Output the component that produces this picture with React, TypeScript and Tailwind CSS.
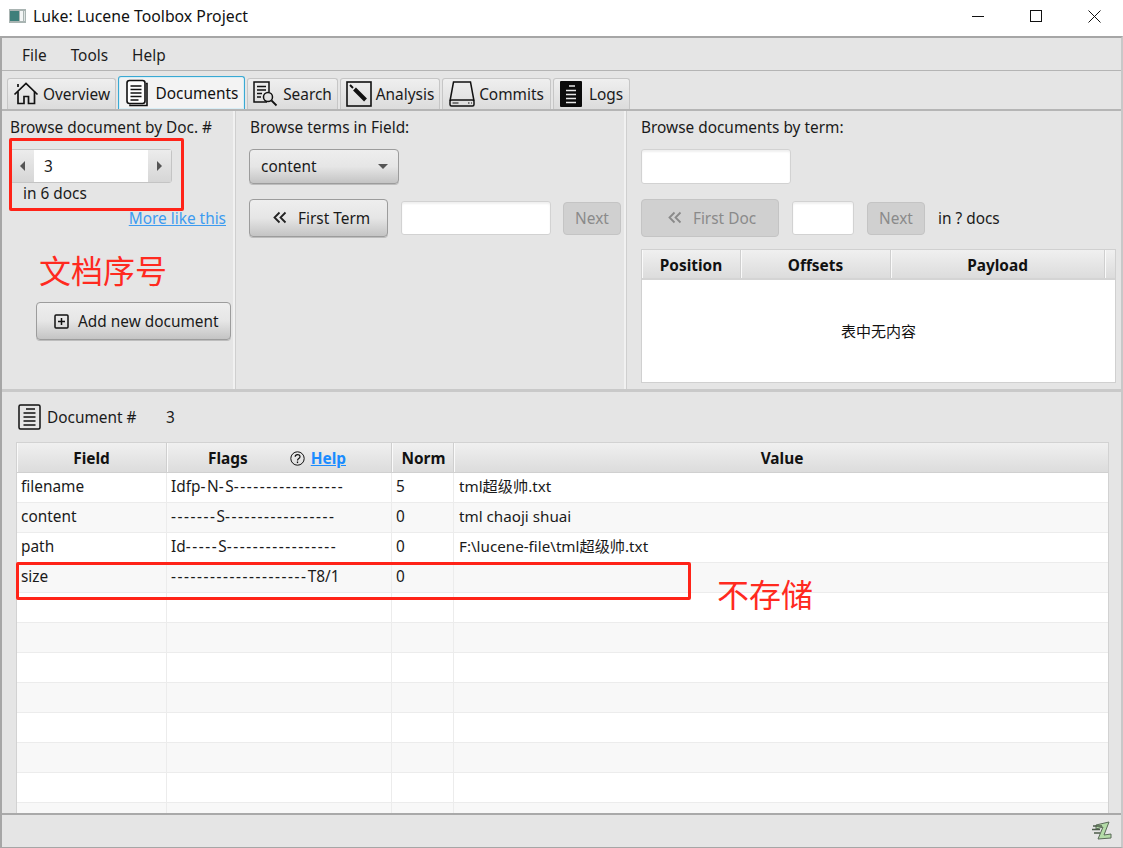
import React from 'react';

const UI_FONT = "font-['Noto_Sans','Noto_Sans_CJK_SC',sans-serif]";

const HomeIcon = () => (
  <svg width="26" height="26" viewBox="0 0 26 26" fill="none" stroke="#111" strokeWidth="1.7">
    <path d="M1.5 13.5 13 2.5l11.5 11" />
    <path d="M5 6V3M5 10.5V22.5h6v-7h4.5v7h6V10.5" />
  </svg>
);

const DocumentsIcon = () => (
  <svg width="24" height="28" viewBox="0 0 24 28" fill="none" stroke="#111" strokeWidth="1.6">
    <path d="M5 25.5v1h17V4.5h-1" />
    <rect x="2" y="1.5" width="18" height="23" rx="2.5" fill="#fff" />
    <path d="M5.5 7h11M5.5 10.5h11M5.5 14h11M5.5 17.5h11M5.5 21h8" strokeWidth="1.5" />
  </svg>
);

const SearchDocIcon = () => (
  <svg width="25" height="26" viewBox="0 0 25 26" fill="none" stroke="#111" strokeWidth="1.5">
    <path d="M14 21H1V1h15v10" />
    <path d="M4 5.5h9M4 9h9M4 12.5h5M4 16h4" />
    <circle cx="15" cy="16" r="4.5" />
    <path d="m18.5 19.5 5 5" strokeWidth="1.8" />
  </svg>
);

const AnalysisIcon = () => (
  <svg width="26" height="26" viewBox="0 0 26 26" fill="none">
    <rect x="1" y="1" width="24" height="24" stroke="#111" strokeWidth="1.6" />
    <path d="m8.5 8 11 11" stroke="#111" strokeWidth="4" />
    <path d="m4 4 3 3" stroke="#111" strokeWidth="2" />
  </svg>
);

const CommitsIcon = () => (
  <svg width="26" height="26" viewBox="0 0 26 26" fill="none" stroke="#111" strokeWidth="1.5">
    <path d="M1 20 4.5 1h17L25 20" />
    <rect x="1" y="19" width="24" height="6" rx="1.5" />
    <path d="M3.500 22h6M19 22h1.500M22 22h1" strokeWidth="1.2" />
  </svg>
);

const LogsIcon = () => (
  <svg width="22" height="26" viewBox="0 0 22 26">
    <rect width="22" height="26" rx="1" fill="#0b0b0b" />
    <path d="M9 5h6M6 9.500h10M6 13.500h10M6 17.500h10M6 21.500h10" stroke="#e8e8e8" strokeWidth="1.5" />
  </svg>
);

const PlusBoxIcon = () => (
  <svg width="15" height="15" viewBox="0 0 15 15" fill="none" stroke="#111">
    <rect x="1" y="1" width="13" height="13" rx="1" strokeWidth="1.5" />
    <path d="M7.500 4v7M4 7.500h7" strokeWidth="1.5" />
  </svg>
);

const ChevronsIcon = ({ color = '#222' }: { color?: string }) => (
  <svg width="14" height="14" viewBox="0 0 14 14" fill="none" stroke={color} strokeWidth="1.8">
    <path d="M6.500 1.500 1.500 6.500l5 5M12.500 1.500l-5 5 5 5" />
  </svg>
);

const DocIcon = () => (
  <svg width="23" height="26" viewBox="0 0 23 26" fill="none" stroke="#111">
    <rect x="1" y="1" width="21" height="24" rx="1.5" strokeWidth="1.5" />
    <path d="M8 5h9M5.500 9h12M5.500 13h12M5.500 17h12M5.500 21h12" strokeWidth="1.4" />
  </svg>
);

const HelpIcon = () => (
  <svg width="15" height="15" viewBox="0 0 15 15" fill="none" stroke="#111">
    <circle cx="7.500" cy="7.500" r="6.700" />
    <path d="M5.200 5.800c0-3 4.800-3 4.800-.1 0 1.800-2.500 1.900-2.500 3.700" strokeWidth="1.2" />
    <path d="M7.500 10.500v1.600" strokeWidth="1.3" />
  </svg>
);

const LukeLogo = () => (
  <svg width="20" height="20" viewBox="0 0 20 20">
    <path d="M4 4 17 1l-5 13 7-1 0 4-13 1 5-12-7 2z" fill="#b4dca8" stroke="#5a6b58" strokeWidth="1" />
    <path d="M1 5h9M0 8.500h8M2 12h6" stroke="#4d5c4b" strokeWidth="1.3" />
  </svg>
);

const tabs = [
  { label: 'Overview', icon: <HomeIcon />, width: 'w-[109px]', gap: 'gap-[4px]' },
  { label: 'Documents', icon: <DocumentsIcon />, width: 'w-[127px]', gap: 'gap-[7px]', active: true },
  { label: 'Search', icon: <SearchDocIcon />, width: 'w-[91px]', gap: 'gap-[5px]' },
  { label: 'Analysis', icon: <AnalysisIcon />, width: 'w-[100px]', gap: 'gap-[4px]' },
  { label: 'Commits', icon: <CommitsIcon />, width: 'w-[109px]', gap: 'gap-[4px]' },
  { label: 'Logs', icon: <LogsIcon />, width: 'w-[77px]', gap: 'gap-[7px]' },
];

const Tab = ({ label, icon, width, gap, active }: { label: string; icon: React.ReactNode; width: string; gap: string; active?: boolean }) => (
  <div
    className={
      active
        ? `${width} ${gap} flex h-[33px] items-center justify-center rounded-t-[3px] border border-b-0 border-[#39a9d3] bg-[#f3f3f3] text-[#111] shadow-[inset_0_0_0_1px_#d8eef6]`
        : `${width} ${gap} flex h-[31px] items-center justify-center rounded-t-[3px] border border-b-0 border-[#c6c6c6] bg-gradient-to-b from-[#efefef] to-[#dcdcdc] text-[#1a1a1a]`
    }
  >
    {icon}
    <span>{label}</span>
  </div>
);

const Button = ({ children, className }: { children: React.ReactNode; className: string }) => (
  <div className={`flex items-center rounded-[4px] border border-[#9c9c9c] bg-gradient-to-b from-[#eeeeee] via-[#e6e6e6] to-[#c4c4c4] text-[#1a1a1a] shadow-[0_1px_0_#bdbdbd] ${className}`}>
    {children}
  </div>
);

const DisabledButton = ({ children, className }: { children: React.ReactNode; className: string }) => (
  <div className={`flex items-center justify-center rounded-[4px] border border-[#c4c4c4] bg-[#d0d0d0] text-[#8a8a8a] ${className}`}>
    {children}
  </div>
);

const Input = ({ className }: { className: string }) => (
  <div className={`rounded-[3px] border border-[#d2d2d2] bg-white shadow-[inset_0_2px_2px_#f0f0f0] ${className}`} />
);

const HeaderCell = ({ children, className }: { children?: React.ReactNode; className: string }) => (
  <div className={`flex h-full shrink-0 items-center justify-center border-r border-[#cfcfcf] bg-gradient-to-b from-[#f0f0f0] to-[#dcdcdc] font-bold text-[#111] shadow-[inset_1px_0_0_#fafafa] ${className}`}>
    {children}
  </div>
);

// the dashes in the flags column are wider than this font's hyphen
const Flags = ({ value }: { value: string }) => (
  <>
    {value.split(/(-+)/).map((part, i) =>
      part.startsWith('-') ? (
        <span key={i} className="tracking-[1.55px]">{part}</span>
      ) : (
        <span key={i}>{part}</span>
      )
    )}
  </>
);

const rows = [
  ['filename', 'Idfp-N-S-----------------', '5', 'tml超级帅.txt'],
  ['content', '-------S-----------------', '0', 'tml chaoji shuai'],
  ['path', 'Id-----S-----------------', '0', 'F:\\lucene-file\\tml超级帅.txt'],
  ['size', '---------------------T8/1', '0', ''],
  ['', '', '', ''],
  ['', '', '', ''],
  ['', '', '', ''],
  ['', '', '', ''],
  ['', '', '', ''],
  ['', '', '', ''],
  ['', '', '', ''],
  ['', '', '', ''],
];

export default function App() {
  return (
    <div className={`relative flex h-[848px] w-[1123px] flex-col overflow-hidden bg-white text-[15.4px] leading-[17px] text-[#1a1a1a] ${UI_FONT}`}>
      {/* Title bar */}
      <div className="flex h-[36px] shrink-0 items-center bg-white pb-[4px] pl-[9px]">
        <svg width="17" height="14" viewBox="0 0 17 14" className="mr-[7px]">
          <rect width="17" height="14" fill="#a9b4b2" />
          <rect x="1" y="2" width="9" height="10" fill="#3e7f7a" />
          <rect x="11" y="2" width="3" height="10" fill="#f4f6f6" />
          <rect x="15" y="2" width="1" height="10" fill="#dfe5e4" />
        </svg>
        <span className="text-[15.8px] text-[#111]">Luke: Lucene Toolbox Project</span>
        <div className="ml-auto flex items-center">
          <div className="flex w-[58px] justify-center"><div className="h-px w-[12px] bg-[#111]" /></div>
          <div className="flex w-[58px] justify-center"><div className="h-[12px] w-[12px] border border-[#111]" /></div>
          <div className="flex w-[58px] justify-center">
            <svg width="13" height="13" viewBox="0 0 13 13" stroke="#111"><path d="m.5.5 12 12M12.500.5l-12 12" /></svg>
          </div>
        </div>
      </div>

      {/* Window body */}
      <div className="flex min-h-0 flex-1 flex-col border-x-2 border-t-2 border-b border-[#a6a6a6] border-r-[#c8c8c8] bg-[#e5e5e5]">
        {/* Menu */}
        <div className="flex h-[33px] shrink-0 items-center gap-[24px] border-b border-[#b4b4b4] pl-[20px] pt-[2px] text-[#1c1c1c]">
          <span>File</span>
          <span>Tools</span>
          <span>Help</span>
        </div>

        {/* Tabs */}
        <div className="flex h-[40px] shrink-0 items-end gap-[2px] border-b-2 border-[#b5b5b5] pl-[5px]">
          {tabs.map((tab) => (
            <Tab key={tab.label} {...tab} />
          ))}
        </div>

        {/* Browse panes */}
        <div className="flex h-[281px] shrink-0 border-b-[3px] border-[#c9c9c9]">
          <div className="flex w-[233px] shrink-0 flex-col border-r-2 border-[#f1f1f1] pl-[8px] pt-[8px] shadow-[1px_0_0_#cfcfcf]">
            <span className="h-[16px] leading-[18px]">Browse document by Doc. #</span>
            <div className="mt-[14px] flex h-[34px] w-[162px] items-stretch rounded-[3px] border border-[#c4c4c4] bg-[#dedede]">
              <div className="flex w-[23px] items-center justify-center bg-gradient-to-b from-[#ececec] to-[#d6d6d6]">
                <div className="h-0 w-0 border-y-[5px] border-r-[5px] border-y-transparent border-r-[#555]" />
              </div>
              <div className="flex w-[114px] items-center bg-white pl-[10px]">3</div>
              <div className="flex flex-1 items-center justify-center bg-gradient-to-b from-[#ececec] to-[#d6d6d6]">
                <div className="h-0 w-0 border-y-[5px] border-l-[5px] border-y-transparent border-l-[#555]" />
              </div>
            </div>
            <span className="mt-[2px] h-[16px] pl-[13px] leading-[18px]">in 6 docs</span>
            <a className="mt-[9px] mr-[7px] h-[17px] self-end leading-[18px] text-[#3d9bf0] underline">More like this</a>
            <span className="mt-[26px] ml-[29px] h-[36px] text-[32px] leading-[36px] text-[#ff2a1f]">文档序号</span>
            <Button className="mt-[13px] ml-[26px] h-[38px] w-[195px] pl-[17px]">
              <PlusBoxIcon />
              <span className="ml-[9px]">Add new document</span>
            </Button>
          </div>

          <div className="flex w-[391px] shrink-0 flex-col border-r-2 border-[#f1f1f1] pl-[14px] pt-[8px] shadow-[1px_0_0_#cfcfcf]">
            <span className="ml-px h-[16px] leading-[18px]">Browse terms in Field:</span>
            <Button className="mt-[14px] h-[35px] w-[150px] justify-between pl-[11px] pr-[10px]">
              <span>content</span>
              <div className="h-0 w-0 border-x-[5px] border-t-[5px] border-x-transparent border-t-[#555]" />
            </Button>
            <div className="mt-[15px] flex items-center">
              <Button className="h-[38px] w-[139px] pl-[23px]">
                <ChevronsIcon />
                <span className="ml-[11px]">First Term</span>
              </Button>
              <Input className="ml-[13px] h-[34px] w-[150px]" />
              <DisabledButton className="ml-[12px] h-[33px] w-[58px]">Next</DisabledButton>
            </div>
          </div>

          <div className="flex min-w-0 flex-1 flex-col pl-[15px] pt-[8px]">
            <span className="h-[16px] leading-[18px]">Browse documents by term:</span>
            <Input className="mt-[14px] h-[35px] w-[150px] shrink-0" />
            <div className="mt-[15px] flex items-center">
              <DisabledButton className="h-[38px] w-[138px] pl-[4px]">
                <ChevronsIcon color="#8a8a8a" />
                <span className="ml-[11px]">First Doc</span>
              </DisabledButton>
              <Input className="ml-[13px] h-[34px] w-[62px]" />
              <DisabledButton className="ml-[13px] h-[33px] w-[58px]">Next</DisabledButton>
              <span className="ml-[13px]">in ? docs</span>
            </div>
            <div className="mt-[12px] flex h-[134px] w-[475px] flex-col border border-[#d0d0d0] bg-white">
              <div className="flex h-[30px] shrink-0 border-b-2 border-[#d4d4d4] bg-[#dcdcdc]">
                <HeaderCell className="w-[99px] pt-[2px]">Position</HeaderCell>
                <HeaderCell className="w-[150px] pt-[2px]">Offsets</HeaderCell>
                <HeaderCell className="w-[214px] pt-[2px]">Payload</HeaderCell>
                <HeaderCell className="flex-1 border-r-0" />
              </div>
              <div className="flex flex-1 items-center justify-center text-[15px] text-[#111]">表中无内容</div>
            </div>
          </div>
        </div>

        {/* Document detail */}
        <div className="flex min-h-0 flex-1 flex-col overflow-hidden pl-[14px]">
          <div className="flex h-[50px] shrink-0 items-center pl-[2px]">
            <DocIcon />
            <span className="ml-[6px] w-[119px]">Document #</span>
            <span>3</span>
          </div>
          <div className="flex min-h-0 w-[1093px] flex-1 flex-col overflow-hidden border-x border-t border-[#d2d2d2] bg-white">
            <div className="flex h-[30px] shrink-0 border-b border-[#d0d0d0]">
              <HeaderCell className="w-[150px] pt-[2px]">Field</HeaderCell>
              <HeaderCell className="w-[225px] pt-[2px]">
                <div className="flex w-full items-center pl-[41px]">
                  <span>Flags</span>
                  <span className="ml-[42px] flex items-center gap-[6px]">
                    <HelpIcon />
                    <a className="text-[#1a8cff] underline">Help</a>
                  </span>
                </div>
              </HeaderCell>
              <HeaderCell className="w-[62px] pl-[2px] pt-[2px]">Norm</HeaderCell>
              <HeaderCell className="flex-1 border-r-0 pl-[2px] pt-[2px]">Value</HeaderCell>
            </div>
            {rows.map((row, i) => (
              <div key={i} className={`flex h-[30px] shrink-0 border-b border-[#ececec] ${i % 2 === 0 ? 'bg-white' : 'bg-[#f8f8f8]'}`}>
                <div className="w-[150px] shrink-0 border-r border-[#ececec] pl-[4px] pt-[5px]">{row[0]}</div>
                <div className="w-[225px] shrink-0 border-r border-[#ececec] pl-[4px] pt-[5px]"><Flags value={row[1]} /></div>
                <div className="w-[62px] shrink-0 border-r border-[#ececec] pl-[4px] pt-[5px]">{row[2]}</div>
                <div className="flex-1 pl-[5px] pt-[5px] text-[15.2px]">{row[3]}</div>
              </div>
            ))}
          </div>
        </div>

        {/* Status bar */}
        <div className="flex h-[34px] shrink-0 items-center justify-end border-t-2 border-[#a9a9a9] pr-[9px]">
          <LukeLogo />
        </div>
      </div>

      {/* Red annotations drawn over the screenshot */}
      <div className="absolute left-[9px] top-[138px] h-[73px] w-[175px] rounded-[2px] border-[3px] border-[#ff2318]" />
      <div className="absolute left-[16px] top-[562px] h-[38px] w-[675px] rounded-[2px] border-[3px] border-[#ff2318]" />
      <span className="absolute left-[717px] top-[577px] text-[32px] leading-[36px] text-[#ff2a1f]">不存储</span>
    </div>
  );
}
